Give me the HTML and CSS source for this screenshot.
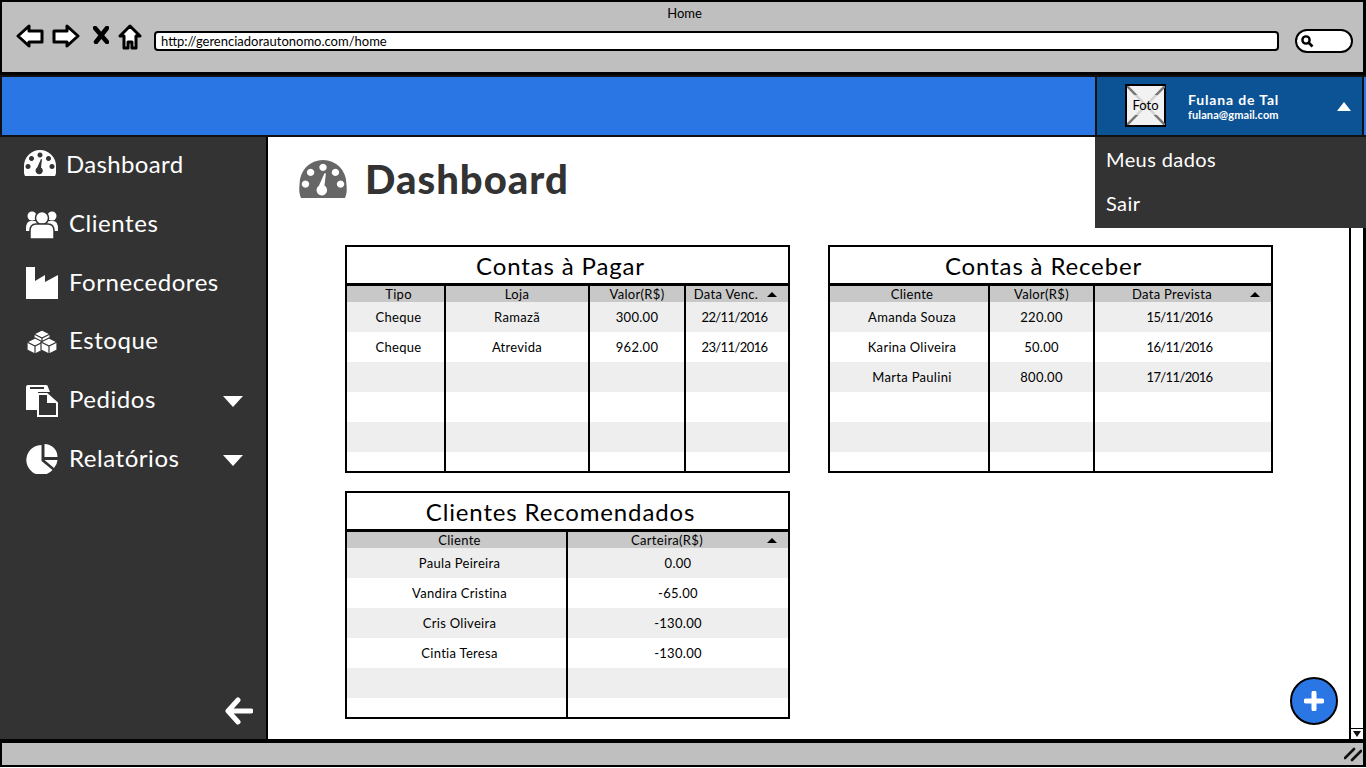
FILE: index.html
```html
<!DOCTYPE html>
<html lang="en">

<head>
    <meta charset="UTF-8">
    <title>Home</title>
    <link rel="stylesheet" href="styles.css">
</head>

<body>
    <svg class="defs" width="0" height="0">
        <symbol id="gauge" viewBox="0 0 32 26">
            <path fill="currentColor" fill-rule="evenodd" d="M1 26 C-1 22 0 17 0 16 A16 16 0 0 1 32 16 C32 17 33 22 31 26 Z
                M16 2.5 a2.5 2.5 0 1 0 .01 0 Z
                M7.5 6 a2.5 2.5 0 1 0 .01 0 Z
                M24.5 6 a2.5 2.5 0 1 0 .01 0 Z
                M4 14 a2.5 2.5 0 1 0 .01 0 Z
                M28 14 a2.5 2.5 0 1 0 .01 0 Z
                M17 9 L18 9.3 L17 17.5 A3.6 3.6 0 1 1 13.2 17.6 Z" />
        </symbol>
    </svg>

    <div class="window">
        <header class="chrome">
            <div class="chrome-title">Home</div>
            <div class="chrome-row">
                <svg class="nav-icon" width="28" height="24" viewBox="0 0 28 24">
                    <path d="M2 12 L13 2 V7 H26 V18 H13 V22 Z" />
                </svg>
                <svg class="nav-icon" width="28" height="24" viewBox="0 0 28 24">
                    <path d="M26 12 L15 2 V7 H2 V18 H15 V22 Z" />
                </svg>
                <svg class="nav-stop" width="16" height="18" viewBox="0 0 16 18">
                    <path d="M2 2 L14 16 M14 2 L3 16" />
                </svg>
                <svg class="nav-icon" width="24" height="26" viewBox="0 0 24 26">
                    <path d="M12 2 L22 12 H18 V24 H14 V18 H10 V24 H6 V12 H2 Z" />
                </svg>
                <div class="url-bar">http://gerenciadorautonomo.com/home</div>
                <div class="search-box">
                    <svg width="14" height="14" viewBox="0 0 14 14">
                        <circle cx="6" cy="6" r="3.6" fill="none" stroke="#000" stroke-width="2.4" />
                        <path d="M8.5 8.5 L12.5 12.5" stroke="#000" stroke-width="2.6" />
                    </svg>
                </div>
            </div>
        </header>

        <div class="topbar">
            <div class="user-box">
                <div class="photo">
                    <svg class="photo-x" width="38" height="39" viewBox="0 0 38 39">
                        <path d="M0 0 L38 39 M38 0 L0 39" stroke="#777" stroke-width="2.5" />
                    </svg>
                    <span class="photo-label">Foto</span>
                </div>
                <div class="user-info">
                    <div class="user-name">Fulana de Tal</div>
                    <div class="user-mail">fulana@gmail.com</div>
                </div>
                <span class="tri tri-up"></span>
            </div>
            <div class="user-menu">
                <div class="user-menu-item">Meus dados</div>
                <div class="user-menu-item">Sair</div>
            </div>
        </div>

        <div class="content">
            <nav class="sidebar">
                <div class="side-item">
                    <svg class="side-icon icon-dash" width="32" height="26"><use href="#gauge" /></svg>
                    <span class="side-text side-text-first">Dashboard</span>
                </div>
                <div class="side-item">
                    <svg class="side-icon" width="32" height="30" viewBox="0 0 32 30">
                        <circle cx="6" cy="7" r="4.5" fill="#fff" />
                        <circle cx="26" cy="7" r="4.5" fill="#fff" />
                        <path d="M0 20 Q0 12 5 12 H27 Q32 12 32 20 V22 H0 Z" fill="#fff" />
                        <circle cx="16" cy="9" r="6.5" fill="#fff" stroke="#333" stroke-width="1.5" />
                        <path d="M4 30 V22 Q4 15 10 15 H22 Q28 15 28 22 V30 Z" fill="#fff" stroke="#333" stroke-width="1.5" />
                    </svg>
                    <span class="side-text">Clientes</span>
                </div>
                <div class="side-item">
                    <svg class="side-icon" width="32" height="32" viewBox="0 0 32 32">
                        <path d="M0 0 H9 V14 L19 8 V15 L32 8 V32 H0 Z" fill="#fff" />
                    </svg>
                    <span class="side-text">Fornecedores</span>
                </div>
                <div class="side-item">
                    <svg class="side-icon" width="32" height="24" viewBox="0 0 30 24">
                        <g fill="#fff" stroke="#333" stroke-width="1.2">
                            <path d="M15 0 L23 4 V12 L15 16 L7 12 V4 Z" />
                            <path d="M7 4 L15 8 L23 4 M15 8 V16" fill="none" />
                            <path d="M8 8 L16 12 V20 L8 24 L0 20 V12 Z" />
                            <path d="M0 12 L8 16 L16 12 M8 16 V24" fill="none" />
                            <path d="M22 8 L30 12 V20 L22 24 L14 20 V12 Z" />
                            <path d="M14 12 L22 16 L30 12 M22 16 V24" fill="none" />
                        </g>
                    </svg>
                    <span class="side-text">Estoque</span>
                </div>
                <div class="side-item">
                    <svg class="side-icon" width="32" height="32" viewBox="0 0 32 32">
                        <path d="M0 2 Q0 0 2 0 H20 Q22 0 22 2 L24 7 H12 V25 H0 Z" fill="#fff" />
                        <path d="M4 3 H18" stroke="#333" stroke-width="2" />
                        <path d="M12 9 H21 L31 18 V31 H12 Z" fill="#333" stroke="#fff" stroke-width="2" />
                        <path d="M21 9 V18 H31 Z" fill="#fff" />
                    </svg>
                    <span class="side-text">Pedidos</span>
                    <span class="tri tri-down"></span>
                </div>
                <div class="side-item">
                    <svg class="side-icon" width="32" height="30" viewBox="0 0 31 30">
                        <path d="M15 1 V17 L26 26 A15 15 0 1 1 15 1 Z" fill="#fff" />
                        <path d="M18 0 A13 13 0 0 1 31 13 H18 Z" fill="#fff" />
                        <path d="M18 16 H31 A14 14 0 0 1 27.5 24 Z" fill="#fff" />
                    </svg>
                    <span class="side-text">Relatórios</span>
                    <span class="tri tri-down"></span>
                </div>
                <svg class="collapse" width="28" height="28" viewBox="0 0 28 28">
                    <path d="M13 3 L3 14 L13 25 M4 14 H26" />
                </svg>
            </nav>

            <main class="main">
                <h1 class="page-title">
                    <svg class="title-icon" width="48" height="38"><use href="#gauge" /></svg>
                    <span>Dashboard</span>
                </h1>

                <div class="tables">
                    <section class="card card-pay">
                        <h2 class="card-title">Contas à Pagar</h2>
                        <table class="grid-table">
                            <colgroup>
                                <col class="w98">
                                <col class="w144">
                                <col class="w96">
                                <col>
                            </colgroup>
                            <thead>
                                <tr>
                                    <th>Tipo</th>
                                    <th>Loja</th>
                                    <th>Valor(R$)</th>
                                    <th class="sorted">Data Venc.<span class="tri tri-sort"></span></th>
                                </tr>
                            </thead>
                            <tbody>
                                <tr><td>Cheque</td><td>Ramazã</td><td>300.00</td><td class="date">22/11/2016</td></tr>
                                <tr><td>Cheque</td><td>Atrevida</td><td>962.00</td><td class="date">23/11/2016</td></tr>
                                <tr><td></td><td></td><td></td><td></td></tr>
                                <tr><td></td><td></td><td></td><td></td></tr>
                                <tr><td></td><td></td><td></td><td></td></tr>
                                <tr class="last"><td></td><td></td><td></td><td></td></tr>
                            </tbody>
                        </table>
                    </section>

                    <section class="card card-receive">
                        <h2 class="card-title">Contas à Receber</h2>
                        <table class="grid-table">
                            <colgroup>
                                <col class="w159">
                                <col class="w105">
                                <col>
                            </colgroup>
                            <thead>
                                <tr>
                                    <th>Cliente</th>
                                    <th>Valor(R$)</th>
                                    <th class="sorted">Data Prevista<span class="tri tri-sort"></span></th>
                                </tr>
                            </thead>
                            <tbody>
                                <tr><td>Amanda Souza</td><td>220.00</td><td class="date">15/11/2016</td></tr>
                                <tr><td>Karina Oliveira</td><td>50.00</td><td class="date">16/11/2016</td></tr>
                                <tr><td>Marta Paulini</td><td>800.00</td><td class="date">17/11/2016</td></tr>
                                <tr><td></td><td></td><td></td></tr>
                                <tr><td></td><td></td><td></td></tr>
                                <tr class="last"><td></td><td></td><td></td></tr>
                            </tbody>
                        </table>
                    </section>

                    <section class="card">
                        <h2 class="card-title">Clientes Recomendados</h2>
                        <table class="grid-table">
                            <colgroup>
                                <col class="w220">
                                <col>
                            </colgroup>
                            <thead>
                                <tr>
                                    <th>Cliente</th>
                                    <th class="sorted">Carteira(R$)<span class="tri tri-sort"></span></th>
                                </tr>
                            </thead>
                            <tbody>
                                <tr><td>Paula Peireira</td><td>0.00</td></tr>
                                <tr><td>Vandira Cristina</td><td>-65.00</td></tr>
                                <tr><td>Cris Oliveira</td><td>-130.00</td></tr>
                                <tr><td>Cintia Teresa</td><td>-130.00</td></tr>
                                <tr><td></td><td></td></tr>
                                <tr class="last"><td></td><td></td></tr>
                            </tbody>
                        </table>
                    </section>
                </div>

                <button class="fab">
                    <svg width="20" height="20" viewBox="0 0 20 20">
                        <path d="M10 2 V18 M2 10 H18" stroke="#fff" stroke-width="5" stroke-linecap="round" />
                    </svg>
                </button>
            </main>

            <div class="scrollbar">
                <div class="scroll-down"><span class="tri tri-scroll"></span></div>
            </div>
        </div>

        <footer class="status">
            <svg width="18" height="16" viewBox="0 0 18 16">
                <path d="M1 12 L10 3 M8 14 L17 5" stroke="#111" stroke-width="2.6" stroke-linecap="round" />
            </svg>
        </footer>
    </div>
</body>

</html>
```

FILE: styles.css
```css
* {
    box-sizing: border-box;
}

html,
body {
    margin: 0;
    height: 100%;
    overflow: hidden;
    background: #fff;
}

body {
    font-family: "Lato", "Noto Sans", sans-serif;
    color: #000;
}

.defs {
    display: block;
    height: 0;
}

.window {
    display: flex;
    flex-direction: column;
    width: 1366px;
    height: 767px;
}

/* browser chrome */
.chrome {
    height: 75px;
    background: #bfbfbf;
    border: 3px solid #000;
    border-top-width: 2px;
    border-left-width: 2px;
    padding: 0 10px 0 14px;
}

.chrome-title {
    height: 21px;
    padding-top: 3px;
    text-align: center;
    font-size: 13px;
}

.chrome-row {
    display: flex;
    align-items: flex-start;
    gap: 8px;
    padding-top: 1px;
}

.nav-icon path {
    fill: #fff;
    stroke: #000;
    stroke-width: 3;
    stroke-linejoin: round;
}

.nav-stop {
    margin: 2px 1px 0 5px;
}

.nav-stop path {
    fill: none;
    stroke: #000;
    stroke-width: 4.5;
    stroke-linecap: round;
}

.url-bar {
    flex: none;
    width: 1125px;
    height: 20px;
    margin: 7px 0 0 4px;
    padding-left: 5px;
    background: #fff;
    border: 2px solid #000;
    border-radius: 4px;
    font-size: 13px;
    line-height: 16px;
}

.search-box {
    display: flex;
    align-items: center;
    flex: none;
    width: 58px;
    height: 24px;
    margin: 5px 0 0 8px;
    padding-left: 3px;
    background: #fff;
    border: 2px solid #000;
    border-radius: 12px;
}

/* blue bar */
.topbar {
    position: relative;
    display: flex;
    justify-content: flex-end;
    height: 62px;
    padding-right: 2px;
    background: #2b76e5;
    border: 2px solid #111;
    border-right-width: 0;
}

.user-box {
    display: flex;
    align-items: center;
    width: 269px;
    padding-left: 28px;
    background: #0b5394;
    border-left: 2px solid #111;
    border-right: 2px solid #111;
}

.photo {
    position: relative;
    display: flex;
    align-items: center;
    justify-content: center;
    flex: none;
    width: 41px;
    height: 43px;
    margin-bottom: 2px;
    background: #f2f2f2;
    border: 2px solid #000;
}

.photo-x {
    position: absolute;
    left: 0;
    top: 0;
}

.photo-label {
    position: relative;
    padding: 2px 1px;
    border-radius: 4px;
    background: rgba(242, 242, 242, 0.75);
    font-size: 13px;
}

.user-info {
    flex: 1;
    padding-left: 22px;
    color: #fff;
}

.user-name {
    font-size: 14px;
    font-weight: 700;
    line-height: 16px;
    letter-spacing: 0.85px;
}

.user-mail {
    font-size: 11px;
    font-weight: 700;
    line-height: 13px;
    letter-spacing: 0.1px;
}

.user-menu {
    position: absolute;
    right: 0;
    top: 60px;
    z-index: 2;
    width: 271px;
    height: 91px;
    padding: 0 11px;
    background: #333;
    color: #fff;
}

.user-menu-item {
    height: 44px;
    font-size: 20px;
    line-height: 45px;
    letter-spacing: 0.4px;
}

/* css triangles */
.tri {
    display: block;
    flex: none;
    width: 0;
    height: 0;
    border-left: 10px solid transparent;
    border-right: 10px solid transparent;
}

.tri-up {
    margin-right: 11px;
    border-left-width: 7px;
    border-right-width: 7px;
    border-bottom: 9px solid #fff;
}

.tri-down {
    margin-top: 6px;
    margin-left: auto;
    margin-right: 23px;
    border-top: 11px solid #fff;
}

.tri-sort {
    position: absolute;
    right: 11px;
    top: 6px;
    border-left-width: 5px;
    border-right-width: 5px;
    border-bottom: 5px solid #000;
}

.tri-scroll {
    border-left-width: 4px;
    border-right-width: 4px;
    border-top: 6px solid #111;
}

/* page body */
.content {
    flex: 1;
    display: flex;
    min-height: 0;
    border-bottom: 2px solid #000;
}

.sidebar {
    display: flex;
    flex-direction: column;
    flex: none;
    width: 268px;
    padding: 9px 0 14px 24px;
    background: #333;
    border-right: 2px solid #000;
    color: #fff;
}

.side-item {
    display: flex;
    align-items: center;
    height: 58.75px;
    font-size: 24px;
    letter-spacing: 0.55px;
}

.side-item:first-child {
    height: 34px;
    margin-bottom: 13px;
    letter-spacing: 0.35px;
}

.side-icon {
    flex: none;
    margin: 4px 11px 0 2px;
}

.icon-dash {
    color: #fff;
    margin: 0 10px 0 0;
}

.collapse {
    margin: auto 13px 0 auto;
}

.collapse path {
    fill: none;
    stroke: #fff;
    stroke-width: 5;
    stroke-linecap: round;
    stroke-linejoin: round;
}

.main {
    position: relative;
    flex: 1;
    padding: 23px 0 0 31px;
}

.page-title {
    display: flex;
    align-items: center;
    gap: 18px;
    height: 38px;
    margin: 0;
    font-size: 40px;
    font-weight: 900;
    letter-spacing: 1px;
    color: #333;
}

.title-icon {
    flex: none;
    color: #666;
}

.tables {
    display: grid;
    grid-template-columns: 445px 445px;
    column-gap: 38px;
    row-gap: 18px;
    margin: 47px 0 0 46px;
}

.card {
    height: 228px;
    border: 2px solid #000;
}

.card-title {
    height: 39px;
    margin: 0;
    padding-right: 14px;
    border-bottom: 3px solid #000;
    text-align: center;
    font-size: 24px;
    font-weight: 400;
    line-height: 38px;
    letter-spacing: 0.85px;
}

.grid-table {
    width: 100%;
    table-layout: fixed;
    border-collapse: collapse;
    font-size: 13px;
    letter-spacing: 0.3px;
}

.w98 {
    width: 98px;
}

.w144 {
    width: 144px;
}

.w96 {
    width: 96px;
}

.w159 {
    width: 159px;
}

.w105 {
    width: 105px;
}

.w220 {
    width: 220px;
}

.grid-table th,
.grid-table td {
    padding: 0;
    text-align: center;
    border-right: 2px solid #000;
}

.grid-table th:first-child,
.grid-table td:first-child {
    padding-left: 6px;
}

.grid-table th:last-child,
.grid-table td:last-child {
    border-right: 0;
}

.grid-table th {
    position: relative;
    height: 16px;
    background: #c8c8c8;
    font-weight: 400;
    line-height: 16px;
}

.grid-table td {
    height: 30px;
}

.grid-table tbody tr:nth-child(odd) {
    background: #eee;
}

.grid-table .last td {
    height: 19px;
}

.grid-table .sorted {
    padding-right: 22px;
}

.grid-table .date {
    letter-spacing: -0.6px;
}

.card-pay td:last-child {
    padding-right: 5px;
}

.card-receive td:last-child {
    padding-right: 7px;
}

.fab {
    position: absolute;
    right: 11px;
    bottom: 14px;
    display: flex;
    align-items: center;
    justify-content: center;
    width: 48px;
    height: 48px;
    padding: 0;
    background: #2b76e5;
    border: 2px solid #000;
    border-radius: 50%;
}

.scrollbar {
    display: flex;
    flex-direction: column;
    justify-content: flex-end;
    flex: none;
    width: 17px;
    background: #fff;
    border-left: 2px solid #000;
    border-right: 3px solid #000;
}

.scroll-down {
    display: flex;
    align-items: center;
    justify-content: center;
    height: 11px;
    border-top: 1px solid #000;
}

/* status bar */
.status {
    display: flex;
    align-items: center;
    justify-content: flex-end;
    flex: none;
    height: 26px;
    padding-right: 1px;
    background: #bfbfbf;
    border: 2px solid #000;
    border-right-width: 3px;
}
```
